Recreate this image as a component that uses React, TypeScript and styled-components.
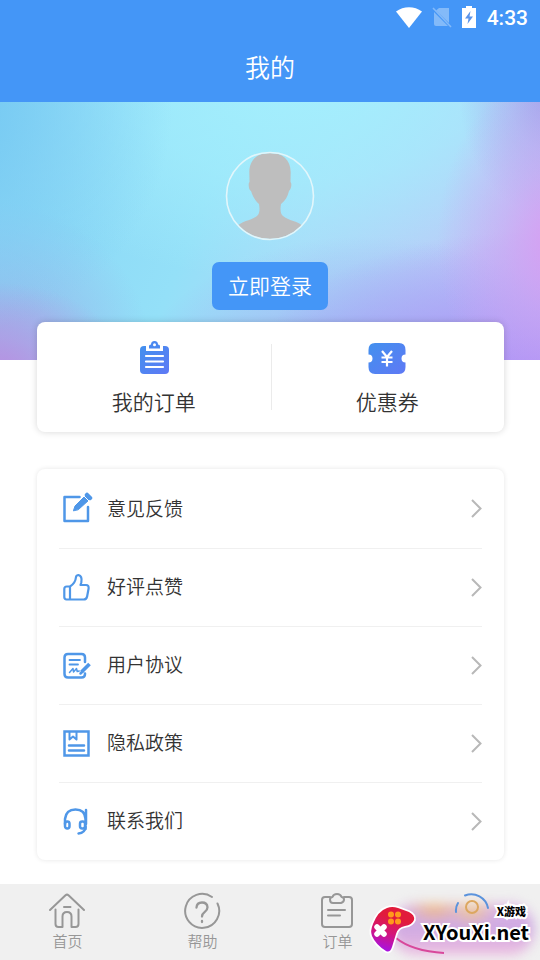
import React from "react";
import styled, { createGlobalStyle } from "styled-components";

const GlobalStyle = createGlobalStyle`
  *, *::before, *::after { box-sizing: border-box; }
  body {
    margin: 0;
    background: #fff;
    color: #333;
    font-family: Roboto, "Noto Sans CJK SC", sans-serif;
    font-weight: 350;
  }
  button { font: inherit; color: inherit; border: 0; padding: 0; background: none; cursor: pointer; }
  a { color: inherit; text-decoration: none; }
  svg { display: block; flex: none; }
`;

const Page = styled.div`
  min-height: 100vh;
  display: flex;
  flex-direction: column;
`;

const Header = styled.header`
  background: #4496f7;
  color: #fff;
`;

const StatusBar = styled.div`
  height: 36px;
  padding: 0 12px;
  display: flex;
  align-items: center;
  justify-content: flex-end;
  gap: 11px;
  font-size: 21px;
  font-weight: 500;
`;

const StatusIcons = styled.div`
  display: flex;
  align-items: center;
  gap: 10px;
  padding: 0 0 2px;
`;

const Title = styled.h1`
  margin: 0;
  height: 66px;
  padding-bottom: 6px;
  display: flex;
  align-items: center;
  justify-content: center;
  font-size: 25px;
  font-weight: 350;
`;

const Banner = styled.section`
  display: flex;
  flex-direction: column;
  align-items: center;
  gap: 21px;
  padding: 49px 0 50px;
  background:
    radial-gradient(ellipse 24% 36% at 0% 106%, #b98ee0 0%, #b896e399 40%, #b59be600 100%),
    radial-gradient(ellipse 22% 66% at 103% 54%, #d79ef2 0%, #d2a2f288 45%, #cfa6f200 100%),
    radial-gradient(ellipse 52% 58% at 98% 108%, #ab8ff6 0%, #ae98f6aa 45%, #aea0f600 100%),
    radial-gradient(ellipse 18% 50% at 103% -4%, #9e9fe9 0%, #a4aaed88 50%, #a8b4f000 100%),
    radial-gradient(ellipse 44% 60% at 68% 112%, #93a9f3 0%, #98b0f388 50%, #98b4f300 100%),
    radial-gradient(ellipse 40% 90% at -8% 0%, #74c8f2 0%, #7cccf399 50%, #84d4f500 100%),
    radial-gradient(ellipse 30% 60% at -2% 98%, #9cabe8 0%, #98b8eb99 50%, #94c4ee00 100%),
    radial-gradient(ellipse 66% 80% at 56% -10%, #a4effd 0%, #a4effdaa 50%, #a4effd00 100%),
    linear-gradient(112deg, #86d4f5 0%, #94e0f8 38%, #a9daf8 56%, #b9ccf8 78%, #c0c0f7 100%);
`;

const LoginButton = styled.button`
  height: 48px;
  padding: 0 16px 2px;
  border-radius: 7px;
  background: #4496f7;
  color: #fff;
  font-size: 21px;
`;

const Card = styled.section`
  margin: 0 36px 0 37px;
  border-radius: 8px;
  background: #fff;
  box-shadow: 0 0 7px rgba(0, 0, 0, 0.16);
`;

const Shortcuts = styled(Card)`
  margin-top: -38px;
  height: 110px;
  display: grid;
  grid-template-columns: 1fr 1fr;
`;

const Shortcut = styled.button`
  display: flex;
  flex-direction: column;
  align-items: center;
  gap: 10px;
  padding-top: 17px;
  font-size: 21px;
  line-height: 32px;

  & + & {
    background: linear-gradient(#ebebeb, #ebebeb) left 22px / 1px 66px no-repeat;
  }
`;

const Menu = styled(Card)`
  margin-top: 37px;
  margin-bottom: 24px;
  padding: 1px 22px 0;
  box-shadow: 0 0 5px rgba(0, 0, 0, 0.1);
`;

const MenuRow = styled.button`
  width: 100%;
  height: 78px;
  padding: 0 0 2px 2px;
  display: flex;
  align-items: center;
  gap: 14px;
  font-size: 19px;
  text-align: left;

  & + & { border-top: 1px solid #f0f0f0; }
`;

const MenuLabel = styled.span`
  flex: 1;
  padding-bottom: 2px;
`;

const TabBar = styled.nav`
  position: relative;
  margin-top: auto;
  height: 76px;
  display: grid;
  grid-template-columns: repeat(4, 1fr);
  background: #f0f0f0;
`;

const Tab = styled.a`
  display: flex;
  flex-direction: column;
  align-items: center;
  gap: 1px;
  padding-top: 8px;
  font-size: 15px;
  line-height: 22px;
  color: #979797;
`;

const Watermark = styled.div`
  position: absolute;
  right: 0;
  bottom: 0;
  width: 172px;
  height: 70px;
  pointer-events: none;
`;

const Smudge = styled.div`
  position: absolute;
  inset: 14px 6px 5px 24px;
  border-radius: 24px;
  filter: blur(6px);
  background:
    radial-gradient(ellipse 20% 36% at 30% 4%, #efb97c 0%, #efbd7c00 100%),
    radial-gradient(ellipse 16% 36% at 56% 10%, #f1c98c 0%, #f1cf9800 100%),
    linear-gradient(180deg, #dcaae0cc 0%, #cca8e2 45%, #eeb0dccc 100%);
`;

const ProfileMark = styled.div`
  position: absolute;
  right: 49px;
  top: 2px;
  color: #5b93dc;
`;

const Controller = styled.svg`
  position: absolute;
  left: 0;
  top: 14px;
`;

const Brand = styled.div`
  position: absolute;
  right: 11px;
  top: 14px;
  display: flex;
  flex-direction: column;
  align-items: flex-end;
  gap: 4px;
  color: #000;
  -webkit-text-stroke: 4px #fff;
  paint-order: stroke fill;
`;

const BrandTag = styled.span`
  padding-right: 3px;
  font: 900 11px/14px "Noto Sans CJK SC", sans-serif;
`;

const BrandName = styled.span`
  font: 700 20px/20px "Noto Sans CJK SC", sans-serif;
`;

const WifiIcon = () => (
  <svg width="26" height="21" viewBox="0 0 26 21" fill="#fff" aria-hidden="true">
    <path d="M13 21 0 4.500C7.500-1.200 18.500-1.200 26 4.500Z" />
  </svg>
);

const NoSimIcon = () => (
  <svg width="20" height="21" viewBox="0 0 20 21" aria-hidden="true">
    <path d="M7 1h10v15L4 3.500Z M2 5l14 14H4a2 2 0 0 1-2-2Z" fill="#83baf9" />
    <path d="m1 1 18 19" stroke="#83baf9" strokeWidth="1.600" />
  </svg>
);

const BatteryIcon = () => (
  <svg width="14" height="22" viewBox="0 0 14 22" aria-hidden="true">
    <path d="M4 0h6v2h4v20H0V2h4Z" fill="#fff" />
    <path d="M8.500 5 3 12.500h3.500L5.500 18 11 10.500H7.500Z" fill="#5b94ea" />
  </svg>
);

const Avatar = () => (
  <svg width="90" height="90" viewBox="0 0 90 90" role="img" aria-label="头像">
    <defs>
      <clipPath id="avatar-clip"><circle cx="45" cy="45" r="43" /></clipPath>
    </defs>
    <path
      clipPath="url(#avatar-clip)"
      fill="#bebebe"
      d="M45 2C32 2 24.500 9 24.300 21L24.500 31C23 32 23.600 39 26 40C28 46 30.500 50 34 53C35 59 34.500 63 32 65C26 70 17 69 10 77L14 90H76L80 77C73 69 63 70 58 65C55.500 63 55 59 56 53C60 50 62.500 46 64 40C66.500 38 67 32 65.500 31L65.700 21C65.500 9 58 2 45 2Z"
    />
    <circle cx="45" cy="45" r="43.500" fill="none" stroke="#e2f6fb" strokeWidth="1.600" />
  </svg>
);

const BlueGradient = ({ id }: { id: string }) => (
  <defs>
    <linearGradient id={id} x1="0" y1="0" x2="1" y2="1">
      <stop offset="0" stopColor="#4290ee" />
      <stop offset="1" stopColor="#5f79f5" />
    </linearGradient>
  </defs>
);

const OrdersIcon = () => (
  <svg width="38" height="38" viewBox="0 0 38 38" aria-hidden="true">
    <BlueGradient id="orders-fill" />
    <rect x="5" y="7" width="29" height="28" rx="4" fill="url(#orders-fill)" />
    <path d="M11 6h4q1-5 4.500-5T24 6h4v6H11Z" fill="#fff" />
    <path d="M14 9.500V7q0-1.500 2-1.500 0-3.500 3.500-3.500T23 5.500q2 0 2 1.500v2.500Z" fill="#4a88f0" />
    <circle cx="19.500" cy="5.800" r="1.500" fill="#fff" />
    <path d="M11 17h17M11 22.500h17M11 28h17" stroke="#fff" strokeWidth="2.200" strokeLinecap="round" />
  </svg>
);

const CouponIcon = () => (
  <svg width="38" height="38" viewBox="0 0 38 38" aria-hidden="true">
    <BlueGradient id="coupon-fill" />
    <path d="M7 4h24q6.500 0 6.500 7v4.500a4 4 0 0 0 0 8V28q0 7-6.500 7H7q-6.500 0-6.500-7v-4.500a4 4 0 0 0 0-8V11q0-7 6.500-7Z" fill="url(#coupon-fill)" />
    <path d="m14 12 5 6 5-6M19 18v9.500M13.500 18.500h11M13.500 23h11" fill="none" stroke="#fff" strokeWidth="2.200" />
  </svg>
);

type LineIconProps = { children: React.ReactNode };
const LineIcon = ({ children }: LineIconProps) => (
  <svg width="32" height="32" viewBox="0 0 32 32" fill="none" stroke="#4f97e8" strokeWidth="2.500" strokeLinecap="round" strokeLinejoin="round" aria-hidden="true">
    {children}
  </svg>
);

const FeedbackIcon = () => (
  <LineIcon>
    <path d="M18.500 5H3.500V29H27V15" />
    <path d="M12.500 18.500 14 14 24 4 28 8 17.500 17.500Z" fill="#4f97e8" strokeWidth="1" />
    <path d="m26 3 3 3" strokeWidth="4.500" />
    <path d="m22.500 3.500 6 6" stroke="#fff" strokeWidth="1" />
  </LineIcon>
);

const LikeIcon = () => (
  <LineIcon>
    <path d="M9 15.500v13H5.500Q3.300 28.500 3.300 26V18q0-2.500 2.500-2.500H9Q14.500 12 15 6q.5-2 2.500-2 4 1 2.800 7.500L19.500 14H25q3 0 2.600 3.500l-1.500 8q-.6 3-3.500 3H9" strokeWidth="2.200" />
  </LineIcon>
);

const AgreementIcon = () => (
  <LineIcon>
    <path d="M24 13V8.500Q24 5 20.500 5H7Q3.500 5 3.500 8.500V25q0 3.500 3.500 3.500h13.500Q24 28.500 24 25v-.5" />
    <path d="M8.500 11H19M8.500 15.500H17" strokeWidth="1.800" />
    <path d="m8.500 23.500 3.500-4 .500 3.500 3-3.500.700 3 2-.5" strokeWidth="1.500" />
    <path d="m20.500 23 8-8" strokeWidth="3.800" strokeLinecap="butt" />
    <path d="m19.500 24.500 2-2" />
  </LineIcon>
);

const PrivacyIcon = () => (
  <LineIcon>
    <path d="M3.500 4.500h24v24h-24Z" strokeLinejoin="miter" />
    <path d="M8.500 5v7.500L12 9.500l3.500 3V5" strokeWidth="2" />
    <path d="M8 18.500h15M8 23.500h15" />
  </LineIcon>
);

const SupportIcon = () => (
  <LineIcon>
    <path d="M4 19V14Q5 4.500 14.500 4.500T24.500 14v10M25 5v14" />
    <rect x="4" y="16.500" width="4.500" height="7" rx="2.200" />
    <rect x="19" y="16.500" width="5" height="7" rx="2.200" />
    <path d="M24.500 22q-.5 6-7 6.500" />
  </LineIcon>
);

const Chevron = () => (
  <svg width="12" height="20" viewBox="0 0 12 20" fill="none" stroke="#b8b8b8" strokeWidth="2" aria-hidden="true">
    <path d="M2 2 10.500 10.500 2 19" />
  </svg>
);

const TabIcon = ({ children }: LineIconProps) => (
  <svg width="38" height="38" viewBox="0 0 38 38" fill="none" stroke="currentColor" strokeWidth="2" strokeLinecap="round" strokeLinejoin="round" aria-hidden="true">
    {children}
  </svg>
);

const HomeIcon = () => (
  <TabIcon>
    <path d="M1 18 16.500 3.200Q18 2 19.500 3.200L35 18" />
    <path d="M6.500 17.500V32q0 3 3 3h4V24.500q0-4.500 4.500-4.500t4.500 4.500V35h4q3 0 3-3V17.500M15 15h6.500" />
  </TabIcon>
);

const HelpIcon = () => (
  <TabIcon>
    <path d="M28 5A17 17 0 1 0 33.500 11.500" />
    <path d="M12.500 15.500q.3-5 5.500-5t5.500 4.700q0 2.600-2.700 4.600T18 24.500M18 29v1" strokeWidth="2.300" />
  </TabIcon>
);

const OrderTabIcon = () => (
  <TabIcon>
    <path d="M11 5H6Q3 5 3 8V32q0 3 3 3H30q3 0 3-3V8q0-3-3-3h-5" />
    <path d="M11 7.500Q11 5 13.500 5 14.500 2 18 2t4.500 3Q25 5 25 7.500t-3 3.500h-8q-3 0-3-3.500ZM9 18h17M9 23.500h12" />
  </TabIcon>
);

const ProfileTabIcon = () => (
  <TabIcon>
    <path d="M12 3.500A17 17 0 0 1 35 16M3 20q-.5-5 2-9" />
    <circle cx="19" cy="15" r="6" stroke="#dca760" />
  </TabIcon>
);

const menuItems = [
  { label: "意见反馈", Icon: FeedbackIcon },
  { label: "好评点赞", Icon: LikeIcon },
  { label: "用户协议", Icon: AgreementIcon },
  { label: "隐私政策", Icon: PrivacyIcon },
  { label: "联系我们", Icon: SupportIcon },
];

export default function App() {
  return (
    <Page>
      <GlobalStyle />
      <Header>
        <StatusBar>
          <StatusIcons>
            <WifiIcon />
            <NoSimIcon />
            <BatteryIcon />
          </StatusIcons>
          <span>4:33</span>
        </StatusBar>
        <Title>我的</Title>
      </Header>
      <main>
        <Banner>
          <Avatar />
          <LoginButton>立即登录</LoginButton>
        </Banner>
        <Shortcuts>
          <Shortcut><OrdersIcon />我的订单</Shortcut>
          <Shortcut><CouponIcon />优惠券</Shortcut>
        </Shortcuts>
        <Menu>
          {menuItems.map(({ label, Icon }) => (
            <MenuRow key={label}>
              <Icon />
              <MenuLabel>{label}</MenuLabel>
              <Chevron />
            </MenuRow>
          ))}
        </Menu>
      </main>
      <TabBar>
        <Tab href="#home"><HomeIcon />首页</Tab>
        <Tab href="#help"><HelpIcon />帮助</Tab>
        <Tab href="#orders"><OrderTabIcon />订单</Tab>
        <Tab href="#profile" aria-label="我的" />
        <Watermark>
          <Smudge />
          <ProfileMark><ProfileTabIcon /></ProfileMark>
          <Controller width="94" height="56" viewBox="0 0 94 56" aria-hidden="true">
            <defs>
              <linearGradient id="pad-fill" x1="0.600" y1="0" x2="0.300" y2="1">
                <stop offset="0.250" stopColor="#e11b3c" />
                <stop offset="0.600" stopColor="#d3157c" />
                <stop offset="1" stopColor="#a512e8" />
              </linearGradient>
            </defs>
            <path d="M28 34Q44 47 76 49" fill="none" stroke="#d8489b" strokeWidth="2" />
            <path
              d="M5 20Q10 7 19 4q5-2 11 0l11 4q6 3 5 8-2 5-9 6-7 1-9 8l-4 13q-2 6-6 4Q8 41 4 32q-2-5 1-12Z"
              fill="url(#pad-fill)"
              stroke="#fff"
              strokeWidth="3.500"
              paintOrder="stroke"
            />
            <path d="m9 23 7 7m0-7-7 7" stroke="#fff" strokeWidth="5.500" strokeLinecap="round" />
            <g fill="#ff9a1c">
              <circle cx="23" cy="10.500" r="3" />
              <circle cx="30" cy="10.500" r="3" />
              <circle cx="23" cy="17.500" r="3" />
              <circle cx="30" cy="17.500" r="3" />
            </g>
          </Controller>
          <Brand>
            <BrandTag>X游戏</BrandTag>
            <BrandName>XYouXi.net</BrandName>
          </Brand>
        </Watermark>
      </TabBar>
    </Page>
  );
}
